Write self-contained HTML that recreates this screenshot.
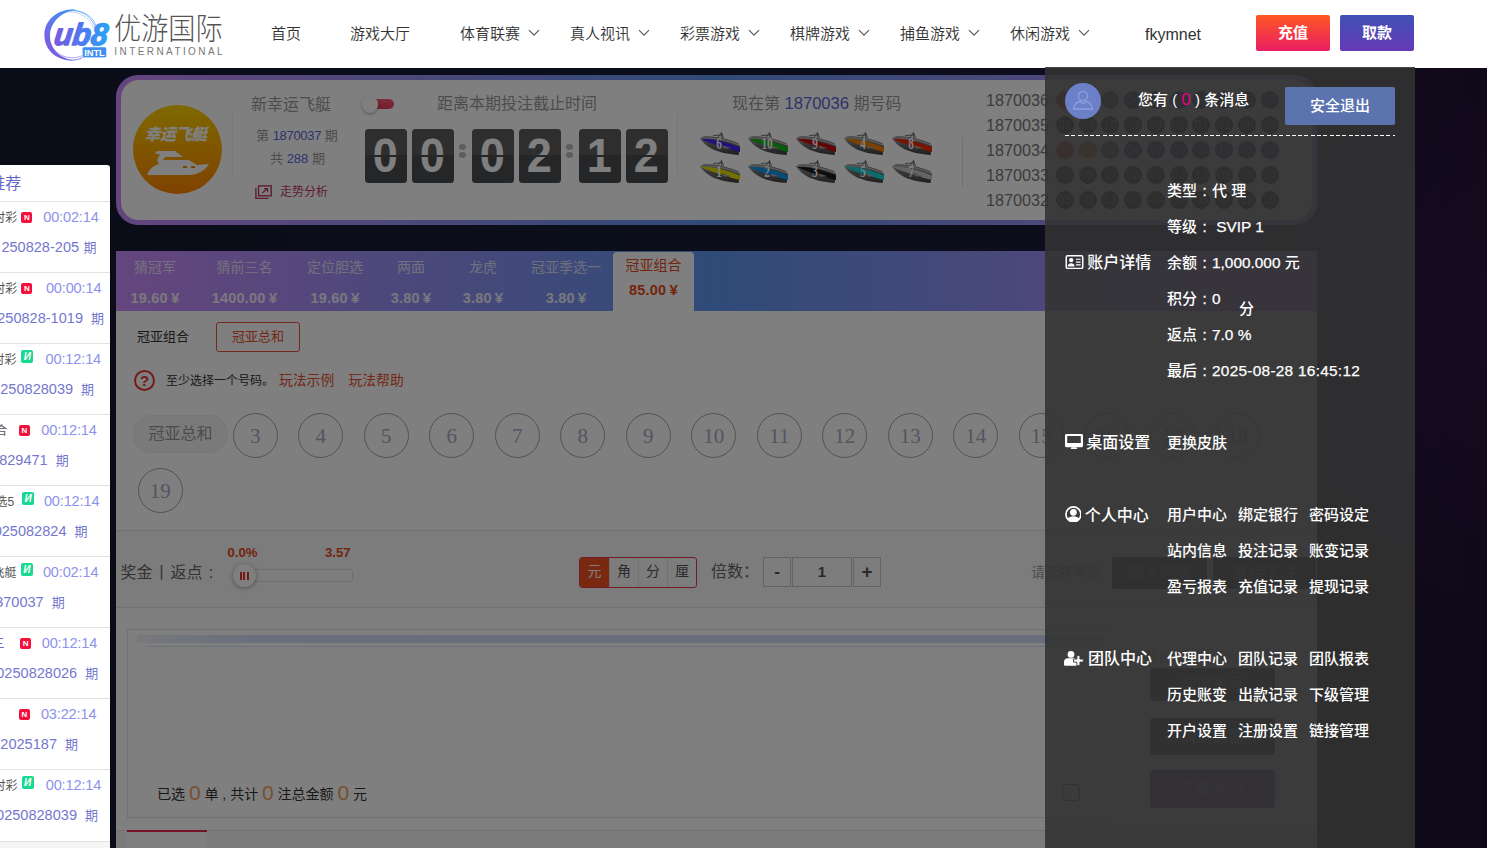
<!DOCTYPE html>
<html lang="zh-CN">
<head>
<meta charset="utf-8">
<title>优游国际</title>
<style>
*{box-sizing:border-box;margin:0;padding:0}
html,body{width:1487px;height:848px;overflow:hidden}
body{font-family:"Liberation Sans","Noto Sans CJK SC",sans-serif;font-size:14px;color:#333;background:#0b0c18;position:relative}
.abs{position:absolute}
.t{position:absolute;white-space:nowrap;line-height:20px;height:20px}
#bg{position:absolute;left:0;top:68px;width:1487px;height:780px;
 background:
 radial-gradient(ellipse 300px 500px at 1487px 250px,rgba(60,25,80,.55),rgba(0,0,0,0) 70%),
 linear-gradient(90deg,#141a2e 0%,#171d36 40%,#1d1a3a 75%,#1c1230 100%);}
#header{position:absolute;left:0;top:0;width:1487px;height:68px;background:#fff;z-index:50}
.nav{position:absolute;top:0;height:68px;line-height:67px;font-size:15px;color:#333;white-space:nowrap;font-weight:350}
.nav svg{position:absolute;top:29px}
.btn{position:absolute;top:15px;width:74px;height:36px;border-radius:2px;color:#fff;font-size:15px;font-weight:bold;text-align:center;line-height:35px}
#overlay{position:absolute;left:0;top:68px;width:1487px;height:780px;background:rgba(0,0,0,.5);z-index:20}
#main{position:absolute;left:0;top:0;width:1487px;height:848px;z-index:10}
#card{position:absolute;left:116px;top:75px;width:1201px;height:150px;border-radius:22px;
 background:linear-gradient(90deg,#ca8cfc 0%,#6096f0 50%,#ca8cfc 100%)}
#cardin{position:absolute;left:5px;top:5px;right:5px;bottom:5px;border-radius:18px;background:#fff}
.dg{position:absolute;top:128.5px;width:42px;height:54px;border-radius:3.5px;background:linear-gradient(180deg,#5c5c5c 0,#5c5c5c 50%,#494c50 50%,#494c50 100%);color:#fff;font-weight:bold;font-size:48px;line-height:54px;text-align:center;overflow:hidden}
.dg:after{content:"";position:absolute;left:0;right:0;top:26.2px;height:2px;background:#4a4c4e}
.colon{position:absolute;width:7px;height:6px;border-radius:50%;background:#bbb}
.hist{position:absolute;left:986px;font-size:16.2px;color:#777;line-height:20px;white-space:nowrap}
.hb{position:absolute;width:18px;height:18px;border-radius:9px;color:#777;font-size:12px;line-height:18px;text-align:center;margin:1px}
/* tabs */
#tabs{position:absolute;left:116px;top:251px;width:1201px;height:60px;background:linear-gradient(90deg,#ca8cfc 0%,#6096f0 50%,#ca8cfc 100%)}
.tab{position:absolute;top:0;height:60px;text-align:center;color:#fff;white-space:nowrap}
.tab .n{position:absolute;left:0;right:0;top:6px;font-size:14px;line-height:20px;opacity:.72}
.tab .p{position:absolute;left:0;right:0;top:37px;font-size:14.5px;line-height:20px;font-weight:bold;opacity:.88;letter-spacing:.2px}
.tab .y{margin-left:3px;font-size:15px}
#panel{position:absolute;left:116px;top:311px;width:1201px;height:537px;background:#fff}
.ball{position:absolute;width:45px;height:45px;border-radius:23px;border:1px solid #a4a4a4;font-family:"Liberation Serif","Noto Serif CJK SC",serif;font-size:21px;color:#a8a8c4;text-align:center;line-height:44px}
/* sidebar */
#side{position:absolute;left:0;top:165px;width:110px;height:683px;background:#fff;z-index:30;border-top-right-radius:3px;overflow:hidden}
#side .ln{position:absolute;left:0;width:110px;height:1px;background:#e2e2e2}
#side .nm{position:absolute;font-size:12px;color:#555;line-height:16px;white-space:nowrap}
#side .tm{position:absolute;letter-spacing:-0.15px;font-size:14.55px;color:#8d92ec;line-height:20px;white-space:nowrap}
#side .is{position:absolute;font-size:14.55px;color:#7577cf;line-height:20px;white-space:nowrap}
.bn{position:absolute;width:11px;height:11px;border-radius:2px;background:#f5103c;color:#fff;font-size:8px;font-weight:bold;line-height:11px;text-align:center}
.bh{position:absolute;width:12px;height:13px;border-radius:2px;background:#19d890;color:#fff;font-size:10px;font-weight:bold;line-height:13px;text-align:center}
/* dropdown */
#drop{position:absolute;left:1045px;top:67px;width:370px;height:781px;background:rgba(51,51,51,.89);z-index:60;color:#fff;font-size:15px;font-weight:500}
#drop .t{line-height:22px;height:22px}
#drop .cl{display:inline-block;width:15px;text-align:center;-webkit-text-stroke:0.3px #fff}
#drop .l{font-size:15.4px;-webkit-text-stroke:0.25px #fff}
</style>
</head>
<body>
<div id="bg"></div>
<div id="main">
<div id="card"><div id="cardin"></div></div>
<div class="abs" style="left:133px;top:105px;width:89px;height:89px;border-radius:50%;background:linear-gradient(180deg,#ffd200 0%,#ffaa00 50%,#ff8400 100%)"></div>
<div class="t" style="left:131px;width:89px;top:125px;text-align:center;color:#fff;font-weight:900;font-style:italic;font-size:16px;letter-spacing:-0.5px">幸运飞艇</div>
<svg class="abs" style="left:145px;top:149px" width="66" height="28" viewBox="0 0 66 28"><path d="M12 2 L30 2 L38 8 L20 8 L18 11 L44 11 L52 16 L64 15 C60 22 52 26 44 26 L2 26 C4 20 8 17 14 15 L12 11 L15 5 L10 5 Z" fill="#fff"/><rect x="38" y="17" width="4" height="2" fill="#f58a00"/><rect x="46" y="17" width="4" height="2" fill="#f58a00"/></svg>
<div class="abs" style="left:232px;top:113px;width:1px;height:62px;background:#ececec"></div>
<div class="t" style="left:251px;top:94.5px;font-size:16px;color:#999">新幸运飞艇</div>
<div class="t" style="left:256px;top:125.5px;font-size:13px;color:#999">第 <span style="color:#6166d6;letter-spacing:-0.3px">1870037</span> 期</div>
<div class="t" style="left:270px;top:148.5px;font-size:13px;color:#999">共 <span style="color:#6166d6">288</span> 期</div>
<svg class="abs" style="left:254.5px;top:185px" width="18" height="14.4" viewBox="0 0 20 16"><path d="M1 3 V15 H15" fill="none" stroke="#c0396a" stroke-width="1.6"/><rect x="4" y="1" width="14" height="11" fill="none" stroke="#c0396a" stroke-width="1.6"/><path d="M8 9 L14 4 M10 4 H14 V8" fill="none" stroke="#c0396a" stroke-width="1.4"/></svg>
<div class="t" style="left:280px;top:182px;font-size:12px;color:#c0396a">走势分析</div>
<div class="abs" style="left:368px;top:99.3px;width:26px;height:10px;border-radius:5px;background:linear-gradient(180deg,#ff5878,#e83a5c)"></div><div class="abs" style="left:361.7px;top:96.2px;width:16.5px;height:16.5px;border-radius:9px;background:#fff;box-shadow:0 1px 3px rgba(0,0,0,.35)"></div>
<div class="t" style="left:437px;top:94px;font-size:16px;color:#999">距离本期投注截止时间</div>
<div class="dg" style="left:364.5px"><span style="display:inline-block;transform:scaleX(.94)">0</span></div>
<div class="dg" style="left:411.5px"><span style="display:inline-block;transform:scaleX(.94)">0</span></div>
<div class="dg" style="left:471.5px"><span style="display:inline-block;transform:scaleX(.94)">0</span></div>
<div class="dg" style="left:518.5px"><span style="display:inline-block;transform:scaleX(.94)">2</span></div>
<div class="dg" style="left:578.5px"><span style="display:inline-block;transform:scaleX(.94)">1</span></div>
<div class="dg" style="left:625.5px"><span style="display:inline-block;transform:scaleX(.94)">2</span></div>
<div class="colon" style="left:459.4px;top:144px"></div><div class="colon" style="left:459.4px;top:151.6px"></div>
<div class="colon" style="left:566.3px;top:144px"></div><div class="colon" style="left:566.3px;top:151.6px"></div>
<div class="abs" style="left:677px;top:113px;width:1px;height:62px;background:#efefef"></div>
<div class="t" style="left:732px;top:94px;font-size:16px;color:#999">现在第 <span style="color:#6166d6;font-size:16.6px">1870036</span> 期号码</div>
<svg width="0" height="0" class="abs"><defs><linearGradient id="hull" x1="0" y1="0" x2="0.3" y2="1"><stop offset="0" stop-color="#9a9a9a"/><stop offset="0.45" stop-color="#6e6e6e"/><stop offset="1" stop-color="#4a4a4a"/></linearGradient></defs></svg>
<svg class="abs" style="left:700px;top:131.7px" width="41" height="24" viewBox="0 0 41 24"><path d="M0 6.3 C10 4.6 24 6.5 38.5 12.3 L40 14.6 L38.6 23 C30 22.6 20 20.6 13 17.6 C7 14.6 3 10.6 0 6.3 Z" fill="url(#hull)"/><path d="M0.3 6.8 C10 6.4 24 8.6 40 15.6 L40 20 L31 17.8 L23 13.6 L21 14 L26 16.6 L12 11.4 C7 9.8 3 8.2 0.3 6.8 Z" fill="#4422f0"/><path d="M22.5 13.4 L31.5 16.2 L24 16.6 Z" fill="#aaa"/><path d="M1 5.9 C12 4.6 24 6.8 39 13" fill="none" stroke="#b8b8b8" stroke-width="1.7"/><path d="M3 5 C12 4 24 6 38.5 11.6" fill="none" stroke="#555" stroke-width="0.7"/><path d="M13 3.5 L22 3 M18 5.5 L21.5 0.5 L23.5 5.8 M21.5 0.5 L21.8 6" fill="none" stroke="#666" stroke-width="0.9"/><text transform="translate(19 17) scale(0.66 1)" font-family="Liberation Serif,serif" font-size="17" font-weight="bold" fill="#fff" text-anchor="middle">6</text></svg>
<svg class="abs" style="left:748px;top:131.7px" width="41" height="24" viewBox="0 0 41 24"><path d="M0 6.3 C10 4.6 24 6.5 38.5 12.3 L40 14.6 L38.6 23 C30 22.6 20 20.6 13 17.6 C7 14.6 3 10.6 0 6.3 Z" fill="url(#hull)"/><path d="M0.3 6.8 C10 6.4 24 8.6 40 15.6 L40 20 L31 17.8 L23 13.6 L21 14 L26 16.6 L12 11.4 C7 9.8 3 8.2 0.3 6.8 Z" fill="#10b818"/><path d="M22.5 13.4 L31.5 16.2 L24 16.6 Z" fill="#aaa"/><path d="M1 5.9 C12 4.6 24 6.8 39 13" fill="none" stroke="#b8b8b8" stroke-width="1.7"/><path d="M3 5 C12 4 24 6 38.5 11.6" fill="none" stroke="#555" stroke-width="0.7"/><path d="M13 3.5 L22 3 M18 5.5 L21.5 0.5 L23.5 5.8 M21.5 0.5 L21.8 6" fill="none" stroke="#666" stroke-width="0.9"/><text transform="translate(19 17) scale(0.66 1)" font-family="Liberation Serif,serif" font-size="17" font-weight="bold" fill="#fff" text-anchor="middle">10</text></svg>
<svg class="abs" style="left:796px;top:131.7px" width="41" height="24" viewBox="0 0 41 24"><path d="M0 6.3 C10 4.6 24 6.5 38.5 12.3 L40 14.6 L38.6 23 C30 22.6 20 20.6 13 17.6 C7 14.6 3 10.6 0 6.3 Z" fill="url(#hull)"/><path d="M0.3 6.8 C10 6.4 24 8.6 40 15.6 L40 20 L31 17.8 L23 13.6 L21 14 L26 16.6 L12 11.4 C7 9.8 3 8.2 0.3 6.8 Z" fill="#c80808"/><path d="M22.5 13.4 L31.5 16.2 L24 16.6 Z" fill="#aaa"/><path d="M1 5.9 C12 4.6 24 6.8 39 13" fill="none" stroke="#b8b8b8" stroke-width="1.7"/><path d="M3 5 C12 4 24 6 38.5 11.6" fill="none" stroke="#555" stroke-width="0.7"/><path d="M13 3.5 L22 3 M18 5.5 L21.5 0.5 L23.5 5.8 M21.5 0.5 L21.8 6" fill="none" stroke="#666" stroke-width="0.9"/><text transform="translate(19 17) scale(0.66 1)" font-family="Liberation Serif,serif" font-size="17" font-weight="bold" fill="#fff" text-anchor="middle">9</text></svg>
<svg class="abs" style="left:844px;top:131.7px" width="41" height="24" viewBox="0 0 41 24"><path d="M0 6.3 C10 4.6 24 6.5 38.5 12.3 L40 14.6 L38.6 23 C30 22.6 20 20.6 13 17.6 C7 14.6 3 10.6 0 6.3 Z" fill="url(#hull)"/><path d="M0.3 6.8 C10 6.4 24 8.6 40 15.6 L40 20 L31 17.8 L23 13.6 L21 14 L26 16.6 L12 11.4 C7 9.8 3 8.2 0.3 6.8 Z" fill="#f58200"/><path d="M22.5 13.4 L31.5 16.2 L24 16.6 Z" fill="#aaa"/><path d="M1 5.9 C12 4.6 24 6.8 39 13" fill="none" stroke="#b8b8b8" stroke-width="1.7"/><path d="M3 5 C12 4 24 6 38.5 11.6" fill="none" stroke="#555" stroke-width="0.7"/><path d="M13 3.5 L22 3 M18 5.5 L21.5 0.5 L23.5 5.8 M21.5 0.5 L21.8 6" fill="none" stroke="#666" stroke-width="0.9"/><text transform="translate(19 17) scale(0.66 1)" font-family="Liberation Serif,serif" font-size="17" font-weight="bold" fill="#fff" text-anchor="middle">4</text></svg>
<svg class="abs" style="left:892px;top:131.7px" width="41" height="24" viewBox="0 0 41 24"><path d="M0 6.3 C10 4.6 24 6.5 38.5 12.3 L40 14.6 L38.6 23 C30 22.6 20 20.6 13 17.6 C7 14.6 3 10.6 0 6.3 Z" fill="url(#hull)"/><path d="M0.3 6.8 C10 6.4 24 8.6 40 15.6 L40 20 L31 17.8 L23 13.6 L21 14 L26 16.6 L12 11.4 C7 9.8 3 8.2 0.3 6.8 Z" fill="#f42800"/><path d="M22.5 13.4 L31.5 16.2 L24 16.6 Z" fill="#aaa"/><path d="M1 5.9 C12 4.6 24 6.8 39 13" fill="none" stroke="#b8b8b8" stroke-width="1.7"/><path d="M3 5 C12 4 24 6 38.5 11.6" fill="none" stroke="#555" stroke-width="0.7"/><path d="M13 3.5 L22 3 M18 5.5 L21.5 0.5 L23.5 5.8 M21.5 0.5 L21.8 6" fill="none" stroke="#666" stroke-width="0.9"/><text transform="translate(19 17) scale(0.66 1)" font-family="Liberation Serif,serif" font-size="17" font-weight="bold" fill="#fff" text-anchor="middle">8</text></svg>
<svg class="abs" style="left:700px;top:159.7px" width="41" height="24" viewBox="0 0 41 24"><path d="M0 6.3 C10 4.6 24 6.5 38.5 12.3 L40 14.6 L38.6 23 C30 22.6 20 20.6 13 17.6 C7 14.6 3 10.6 0 6.3 Z" fill="url(#hull)"/><path d="M0.3 6.8 C10 6.4 24 8.6 40 15.6 L40 20 L31 17.8 L23 13.6 L21 14 L26 16.6 L12 11.4 C7 9.8 3 8.2 0.3 6.8 Z" fill="#e8e000"/><path d="M22.5 13.4 L31.5 16.2 L24 16.6 Z" fill="#aaa"/><path d="M1 5.9 C12 4.6 24 6.8 39 13" fill="none" stroke="#b8b8b8" stroke-width="1.7"/><path d="M3 5 C12 4 24 6 38.5 11.6" fill="none" stroke="#555" stroke-width="0.7"/><path d="M13 3.5 L22 3 M18 5.5 L21.5 0.5 L23.5 5.8 M21.5 0.5 L21.8 6" fill="none" stroke="#666" stroke-width="0.9"/><text transform="translate(19 17) scale(0.66 1)" font-family="Liberation Serif,serif" font-size="17" font-weight="bold" fill="#fff" text-anchor="middle">1</text></svg>
<svg class="abs" style="left:748px;top:159.7px" width="41" height="24" viewBox="0 0 41 24"><path d="M0 6.3 C10 4.6 24 6.5 38.5 12.3 L40 14.6 L38.6 23 C30 22.6 20 20.6 13 17.6 C7 14.6 3 10.6 0 6.3 Z" fill="url(#hull)"/><path d="M0.3 6.8 C10 6.4 24 8.6 40 15.6 L40 20 L31 17.8 L23 13.6 L21 14 L26 16.6 L12 11.4 C7 9.8 3 8.2 0.3 6.8 Z" fill="#0a98f0"/><path d="M22.5 13.4 L31.5 16.2 L24 16.6 Z" fill="#aaa"/><path d="M1 5.9 C12 4.6 24 6.8 39 13" fill="none" stroke="#b8b8b8" stroke-width="1.7"/><path d="M3 5 C12 4 24 6 38.5 11.6" fill="none" stroke="#555" stroke-width="0.7"/><path d="M13 3.5 L22 3 M18 5.5 L21.5 0.5 L23.5 5.8 M21.5 0.5 L21.8 6" fill="none" stroke="#666" stroke-width="0.9"/><text transform="translate(19 17) scale(0.66 1)" font-family="Liberation Serif,serif" font-size="17" font-weight="bold" fill="#fff" text-anchor="middle">2</text></svg>
<svg class="abs" style="left:796px;top:159.7px" width="41" height="24" viewBox="0 0 41 24"><path d="M0 6.3 C10 4.6 24 6.5 38.5 12.3 L40 14.6 L38.6 23 C30 22.6 20 20.6 13 17.6 C7 14.6 3 10.6 0 6.3 Z" fill="url(#hull)"/><path d="M0.3 6.8 C10 6.4 24 8.6 40 15.6 L40 20 L31 17.8 L23 13.6 L21 14 L26 16.6 L12 11.4 C7 9.8 3 8.2 0.3 6.8 Z" fill="#1a1a1a"/><path d="M22.5 13.4 L31.5 16.2 L24 16.6 Z" fill="#aaa"/><path d="M1 5.9 C12 4.6 24 6.8 39 13" fill="none" stroke="#b8b8b8" stroke-width="1.7"/><path d="M3 5 C12 4 24 6 38.5 11.6" fill="none" stroke="#555" stroke-width="0.7"/><path d="M13 3.5 L22 3 M18 5.5 L21.5 0.5 L23.5 5.8 M21.5 0.5 L21.8 6" fill="none" stroke="#666" stroke-width="0.9"/><text transform="translate(19 17) scale(0.66 1)" font-family="Liberation Serif,serif" font-size="17" font-weight="bold" fill="#fff" text-anchor="middle">3</text></svg>
<svg class="abs" style="left:844px;top:159.7px" width="41" height="24" viewBox="0 0 41 24"><path d="M0 6.3 C10 4.6 24 6.5 38.5 12.3 L40 14.6 L38.6 23 C30 22.6 20 20.6 13 17.6 C7 14.6 3 10.6 0 6.3 Z" fill="url(#hull)"/><path d="M0.3 6.8 C10 6.4 24 8.6 40 15.6 L40 20 L31 17.8 L23 13.6 L21 14 L26 16.6 L12 11.4 C7 9.8 3 8.2 0.3 6.8 Z" fill="#12d8d8"/><path d="M22.5 13.4 L31.5 16.2 L24 16.6 Z" fill="#aaa"/><path d="M1 5.9 C12 4.6 24 6.8 39 13" fill="none" stroke="#b8b8b8" stroke-width="1.7"/><path d="M3 5 C12 4 24 6 38.5 11.6" fill="none" stroke="#555" stroke-width="0.7"/><path d="M13 3.5 L22 3 M18 5.5 L21.5 0.5 L23.5 5.8 M21.5 0.5 L21.8 6" fill="none" stroke="#666" stroke-width="0.9"/><text transform="translate(19 17) scale(0.66 1)" font-family="Liberation Serif,serif" font-size="17" font-weight="bold" fill="#fff" text-anchor="middle">5</text></svg>
<svg class="abs" style="left:892px;top:159.7px" width="41" height="24" viewBox="0 0 41 24"><path d="M0 6.3 C10 4.6 24 6.5 38.5 12.3 L40 14.6 L38.6 23 C30 22.6 20 20.6 13 17.6 C7 14.6 3 10.6 0 6.3 Z" fill="url(#hull)"/><path d="M0.3 6.8 C10 6.4 24 8.6 40 15.6 L40 20 L31 17.8 L23 13.6 L21 14 L26 16.6 L12 11.4 C7 9.8 3 8.2 0.3 6.8 Z" fill="#c8c8c8"/><path d="M22.5 13.4 L31.5 16.2 L24 16.6 Z" fill="#aaa"/><path d="M1 5.9 C12 4.6 24 6.8 39 13" fill="none" stroke="#b8b8b8" stroke-width="1.7"/><path d="M3 5 C12 4 24 6 38.5 11.6" fill="none" stroke="#555" stroke-width="0.7"/><path d="M13 3.5 L22 3 M18 5.5 L21.5 0.5 L23.5 5.8 M21.5 0.5 L21.8 6" fill="none" stroke="#666" stroke-width="0.9"/><text transform="translate(19 17) scale(0.66 1)" font-family="Liberation Serif,serif" font-size="17" font-weight="bold" fill="#fff" text-anchor="middle">7</text></svg>
<div class="abs" style="left:962px;top:137px;width:1px;height:50px;background:#e3e3e3"></div>
<div class="hist" style="top:89.5px">1870036</div>
<div class="hb" style="left:1054.9px;top:89.5px;background:#d83020">06</div>
<div class="hb" style="left:1077.66px;top:89.5px;background:#c87010">03</div>
<div class="hb" style="left:1100.42px;top:89.5px;background:#506030">09</div>
<div class="hb" style="left:1123.18px;top:89.5px;background:#1c2870">04</div>
<div class="hb" style="left:1145.94px;top:89.5px;background:#1c2870">08</div>
<div class="hb" style="left:1168.7px;top:89.5px;background:#1c2870">01</div>
<div class="hb" style="left:1191.46px;top:89.5px;background:#1c2870">02</div>
<div class="hb" style="left:1214.22px;top:89.5px;background:#1c2870">10</div>
<div class="hb" style="left:1236.98px;top:89.5px;background:#1c2870">05</div>
<div class="hb" style="left:1259.74px;top:89.5px;background:#1c2870">07</div>
<div class="hist" style="top:114.5px">1870035</div>
<div class="hb" style="left:1054.9px;top:114.5px;background:#1c1c1c">01</div>
<div class="hb" style="left:1077.66px;top:114.5px;background:#1c1c1c">04</div>
<div class="hb" style="left:1100.42px;top:114.5px;background:#1c1c1c">10</div>
<div class="hb" style="left:1123.18px;top:114.5px;background:#1c1c1c">03</div>
<div class="hb" style="left:1145.94px;top:114.5px;background:#1c1c1c">09</div>
<div class="hb" style="left:1168.7px;top:114.5px;background:#1c1c1c">06</div>
<div class="hb" style="left:1191.46px;top:114.5px;background:#1c1c1c">07</div>
<div class="hb" style="left:1214.22px;top:114.5px;background:#1c1c1c">02</div>
<div class="hb" style="left:1236.98px;top:114.5px;background:#1c1c1c">08</div>
<div class="hb" style="left:1259.74px;top:114.5px;background:#1c1c1c">05</div>
<div class="hist" style="top:139.5px">1870034</div>
<div class="hb" style="left:1054.9px;top:139.5px;background:#d83020">05</div>
<div class="hb" style="left:1077.66px;top:139.5px;background:#c87010">07</div>
<div class="hb" style="left:1100.42px;top:139.5px;background:#506030">06</div>
<div class="hb" style="left:1123.18px;top:139.5px;background:#1c2870">04</div>
<div class="hb" style="left:1145.94px;top:139.5px;background:#1c2870">02</div>
<div class="hb" style="left:1168.7px;top:139.5px;background:#1c2870">08</div>
<div class="hb" style="left:1191.46px;top:139.5px;background:#1c2870">03</div>
<div class="hb" style="left:1214.22px;top:139.5px;background:#1c2870">10</div>
<div class="hb" style="left:1236.98px;top:139.5px;background:#1c2870">01</div>
<div class="hb" style="left:1259.74px;top:139.5px;background:#1c2870">09</div>
<div class="hist" style="top:164.5px">1870033</div>
<div class="hb" style="left:1054.9px;top:164.5px;background:#1c1c1c">09</div>
<div class="hb" style="left:1077.66px;top:164.5px;background:#1c1c1c">05</div>
<div class="hb" style="left:1100.42px;top:164.5px;background:#1c1c1c">07</div>
<div class="hb" style="left:1123.18px;top:164.5px;background:#1c1c1c">06</div>
<div class="hb" style="left:1145.94px;top:164.5px;background:#1c1c1c">01</div>
<div class="hb" style="left:1168.7px;top:164.5px;background:#1c1c1c">02</div>
<div class="hb" style="left:1191.46px;top:164.5px;background:#1c1c1c">10</div>
<div class="hb" style="left:1214.22px;top:164.5px;background:#1c1c1c">03</div>
<div class="hb" style="left:1236.98px;top:164.5px;background:#1c1c1c">08</div>
<div class="hb" style="left:1259.74px;top:164.5px;background:#1c1c1c">04</div>
<div class="hist" style="top:189.5px">1870032</div>
<div class="hb" style="left:1054.9px;top:189.5px;background:#1c1c1c">05</div>
<div class="hb" style="left:1077.66px;top:189.5px;background:#1c1c1c">01</div>
<div class="hb" style="left:1100.42px;top:189.5px;background:#1c1c1c">03</div>
<div class="hb" style="left:1123.18px;top:189.5px;background:#1c1c1c">08</div>
<div class="hb" style="left:1145.94px;top:189.5px;background:#1c1c1c">09</div>
<div class="hb" style="left:1168.7px;top:189.5px;background:#1c1c1c">04</div>
<div class="hb" style="left:1191.46px;top:189.5px;background:#1c1c1c">06</div>
<div class="hb" style="left:1214.22px;top:189.5px;background:#1c1c1c">07</div>
<div class="hb" style="left:1236.98px;top:189.5px;background:#1c1c1c">02</div>
<div class="hb" style="left:1259.74px;top:189.5px;background:#1c1c1c">10</div>
<div id="tabs">
<div class="tab" style="left:0px;width:78px"><div class="n">猜冠军</div><div class="p">19.60<span class="y">¥</span></div></div>
<div class="tab" style="left:78px;width:101px"><div class="n">猜前三名</div><div class="p">1400.00<span class="y">¥</span></div></div>
<div class="tab" style="left:179px;width:80px"><div class="n">定位胆选</div><div class="p">19.60<span class="y">¥</span></div></div>
<div class="tab" style="left:259px;width:72px"><div class="n">两面</div><div class="p">3.80<span class="y">¥</span></div></div>
<div class="tab" style="left:331px;width:72px"><div class="n">龙虎</div><div class="p">3.80<span class="y">¥</span></div></div>
<div class="tab" style="left:403px;width:94px"><div class="n">冠亚季选一</div><div class="p">3.80<span class="y">¥</span></div></div>
<div class="tab" style="left:497px;width:81px;top:1px;height:59px;background:#fff;border-radius:4px 4px 0 0;color:#e64a19"><div class="n" style="top:3px;opacity:1">冠亚组合</div><div class="p" style="top:28px;opacity:1">85.00<span class="y">¥</span></div></div>
</div>
<div id="panel"></div>
<div class="t" style="left:137px;top:327px;font-size:13px;color:#333">冠亚组合</div>
<div class="abs" style="left:216px;top:322px;width:84px;height:30px;border:1px solid #e8503a;border-radius:3px;color:#e65030;font-size:13px;line-height:28px;text-align:center">冠亚总和</div>
<div class="abs" style="left:134px;top:370px;width:21px;height:21px;border-radius:11px;border:2px solid #e53935;color:#e53935;font-weight:bold;font-size:15px;line-height:17px;text-align:center">?</div>
<div class="t" style="left:166px;top:371px;font-size:12px;color:#333">至少选择一个号码。</div>
<div class="t" style="left:279px;top:371px;font-size:13.8px;color:#e65030">玩法示例</div>
<div class="t" style="left:348.5px;top:371px;font-size:13.8px;color:#e65030">玩法帮助</div>
<div class="abs" style="left:133px;top:415px;width:95px;height:38px;border-radius:19px;background:#f5f5f5;border:1px solid #ececec;color:#999;font-size:16px;line-height:36px;text-align:center">冠亚总和</div>
<div class="ball" style="left:232.8px;top:413px">3</div>
<div class="ball" style="left:298.3px;top:413px">4</div>
<div class="ball" style="left:363.8px;top:413px">5</div>
<div class="ball" style="left:429.3px;top:413px">6</div>
<div class="ball" style="left:494.8px;top:413px">7</div>
<div class="ball" style="left:560.3px;top:413px">8</div>
<div class="ball" style="left:625.8px;top:413px">9</div>
<div class="ball" style="left:691.3px;top:413px">10</div>
<div class="ball" style="left:756.8px;top:413px">11</div>
<div class="ball" style="left:822.3px;top:413px">12</div>
<div class="ball" style="left:887.8px;top:413px">13</div>
<div class="ball" style="left:953.3px;top:413px">14</div>
<div class="ball" style="left:1018.8px;top:413px">15</div>
<div class="ball" style="left:1084.3px;top:413px">16</div>
<div class="ball" style="left:1149.8px;top:413px">17</div>
<div class="ball" style="left:1215.3px;top:413px">18</div>
<div class="ball" style="left:137.8px;top:468px">19</div>
<div class="abs" style="left:116px;top:530px;width:1201px;height:78px;background:#f8f8f8;border-top:1px solid #e0e0e0;border-bottom:1px solid #e0e0e0"></div>
<div class="t" style="left:120.5px;top:563px;font-size:16px;color:#666">奖金<span style="display:inline-block;width:18px;text-align:center">丨</span>返点<span style="display:inline-block;width:17px;text-align:center">:</span></div>
<div class="t" style="left:227.5px;top:543px;font-size:13.2px;font-weight:bold;color:#e64a19">0.0%</div>
<div class="t" style="left:325px;top:543px;font-size:13.2px;font-weight:bold;color:#e64a19">3.57</div>
<div class="abs" style="left:236px;top:569px;width:117px;height:13px;border-radius:3px;border:1px solid #ddd;background:#fafafa"></div>
<div class="abs" style="left:233px;top:564px;width:23px;height:23px;border-radius:12px;background:#fff;box-shadow:0 1px 4px rgba(0,0,0,.35)"></div>
<div class="abs" style="left:240px;top:572px;width:9px;height:8px;background:linear-gradient(90deg,#e53935 0 2px,transparent 2px 3.5px,#e53935 3.5px 5.5px,transparent 5.5px 7px,#e53935 7px 9px)"></div>
<div class="abs" style="left:579px;top:557px;width:118px;height:31px;border:1px solid #e53950;border-radius:3px;background:#fafafa;overflow:hidden"><div class="abs" style="left:0px;top:0;width:29px;height:29px;line-height:27px;text-align:center;font-size:14px;background:#f4511e;color:#fff;">元</div><div class="abs" style="left:29px;top:0;width:29px;height:29px;line-height:27px;text-align:center;font-size:14px;color:#555;border-left:1px solid #e4e4e4;">角</div><div class="abs" style="left:58px;top:0;width:29px;height:29px;line-height:27px;text-align:center;font-size:14px;color:#555;border-left:1px solid #e4e4e4;">分</div><div class="abs" style="left:87px;top:0;width:29px;height:29px;line-height:27px;text-align:center;font-size:14px;color:#555;border-left:1px solid #e4e4e4;">厘</div></div>
<div class="t" style="left:711px;top:562px;font-size:16px;color:#666">倍数：</div>
<div class="abs" style="left:763px;top:557px;width:28px;height:30px;border:1px solid #c6c6c6;background:#fafafa;color:#555;font-weight:bold;font-size:17px;line-height:27px;text-align:center">-</div>
<div class="abs" style="left:792px;top:557px;width:60px;height:30px;border:1px solid #c6c6c6;background:#fafafa;color:#555;font-weight:bold;font-size:15px;line-height:28px;text-align:center">1</div>
<div class="abs" style="left:853px;top:557px;width:28px;height:30px;border:1px solid #c6c6c6;background:#fafafa;color:#555;font-weight:bold;font-size:19px;line-height:27px;text-align:center">+</div>
<div class="t" style="left:1031px;top:562px;font-size:14px;color:#999">请选择号码</div>
<div class="abs" style="left:1112px;top:557px;width:95px;height:32px;border-radius:3px;background:#3a3a3a;color:#777;font-size:16px;line-height:32px;text-align:center;font-weight:bold">加入购篮</div>
<div class="abs" style="left:1213px;top:557px;width:103px;height:32px;border-radius:3px;background:#3a3a3a;color:#777;font-size:16px;line-height:32px;text-align:center;font-weight:bold">直接下注</div>
<div class="abs" style="left:127px;top:629px;width:985px;height:189px;border:1px solid #e2e2e2;border-right:none"></div>
<div class="abs" style="left:137px;top:635px;width:966px;height:8px;background:linear-gradient(90deg,#eef2fb 0,#e4eaf8 40px,#d3def8 120px,#d0dcf8 100%)"></div>
<div class="abs" style="left:146px;top:646px;width:957px;height:1px;background:#d9e0f2"></div>
<div class="t" style="left:157px;top:783px;font-size:14px;color:#333">已选 <span style="font-size:21px;color:#f0a060;font-weight:300;vertical-align:-1px">0</span> 单 , 共计 <span style="font-size:21px;color:#f0a060;font-weight:300;vertical-align:-1px">0</span> 注总金额 <span style="font-size:21px;color:#f0a060;font-weight:300;vertical-align:-1px">0</span> 元</div>
<div class="abs" style="left:116px;top:830px;width:1201px;height:18px;background:#f6f6f6;border-top:1px solid #e2e2e2"></div>
<div class="abs" style="left:127px;top:830px;width:80px;height:18px;background:#fff;border-top:2px solid #e8274b"></div>
<div class="abs" style="left:1150px;top:770px;width:125px;height:38px;border-radius:3px;background:#6a3aa8;color:#9a78d0;font-size:17px;line-height:38px;text-align:center;font-weight:bold">立即投注</div>
<div class="abs" style="left:1150px;top:668px;width:125px;height:33px;border-radius:3px;background:#555;color:#888;font-size:16px;line-height:33px;text-align:center;font-weight:bold">我要追号</div>
<div class="abs" style="left:1150px;top:718px;width:125px;height:37px;border-radius:3px;background:#555;color:#888;font-size:16px;line-height:37px;text-align:center;font-weight:bold">清空购篮</div>
<div class="t" style="left:1144px;top:647px;font-size:14px;color:#aaa">截止时间 1:00:00:12</div>
<div class="abs" style="left:1062px;top:784px;width:18px;height:17px;border-radius:4px;border:1.5px solid #555;background:#fff"></div>
</div>
<div id="overlay"></div>
<div id="side">
<div class="t" style="right:88.7px;top:9px;font-size:16px;color:#6467c9">推荐</div>
<div class="ln" style="top:36px"></div>
<div class="nm" style="right:92.8px;top:44.8px">时时彩</div>
<div class="bn" style="left:21.3px;top:47.099999999999994px">N</div>
<div class="tm" style="left:43.2px;top:41.599999999999994px">00:02:14</div>
<div class="is" style="right:13.5px;top:72.1px">250828-205<span style="font-size:13px;margin-left:4.4px">期</span></div>
<div class="ln" style="top:107px"></div>
<div class="nm" style="right:92.8px;top:115.8px">时时彩</div>
<div class="bn" style="left:21.3px;top:118.1px">N</div>
<div class="tm" style="left:45.9px;top:112.6px">00:00:14</div>
<div class="is" style="right:6px;top:143.1px">250828-1019<span style="font-size:13px;margin-left:8px">期</span></div>
<div class="ln" style="top:178px"></div>
<div class="nm" style="right:93.5px;top:186.8px">时时彩</div>
<div class="bh" style="left:21.3px;top:184.8px"><i>И</i></div>
<div class="tm" style="left:45.6px;top:183.60000000000002px">00:12:14</div>
<div class="is" style="right:15.900000000000006px;top:214.10000000000002px">250828039<span style="font-size:13px;margin-left:8px">期</span></div>
<div class="ln" style="top:249px"></div>
<div class="nm" style="right:102.7px;top:257.8px">六合</div>
<div class="bn" style="left:19px;top:260.1px">N</div>
<div class="tm" style="left:41.3px;top:254.60000000000002px">00:12:14</div>
<div class="is" style="right:41.3px;top:285.1px">829471<span style="font-size:13px;margin-left:8px">期</span></div>
<div class="ln" style="top:320px"></div>
<div class="nm" style="right:95.8px;top:328.8px">11选5</div>
<div class="bh" style="left:22px;top:326.8px"><i>И</i></div>
<div class="tm" style="left:43.9px;top:325.6px">00:12:14</div>
<div class="is" style="right:22.5px;top:356.1px">025082824<span style="font-size:13px;margin-left:8px">期</span></div>
<div class="ln" style="top:391px"></div>
<div class="nm" style="right:93.5px;top:399.8px">幸运飞艇</div>
<div class="bh" style="left:20.8px;top:397.8px"><i>И</i></div>
<div class="tm" style="left:42.9px;top:396.6px">00:02:14</div>
<div class="is" style="right:45.3px;top:427.1px">370037<span style="font-size:13px;margin-left:8px">期</span></div>
<div class="ln" style="top:462px"></div>
<div class="nm" style="right:105.4px;top:470.8px;color:#6a6ac8">快三</div>
<div class="bn" style="left:20.2px;top:473.1px">N</div>
<div class="tm" style="left:41.7px;top:467.6px">00:12:14</div>
<div class="is" style="right:11.799999999999997px;top:498.1px">0250828026<span style="font-size:13px;margin-left:8px">期</span></div>
<div class="ln" style="top:533px"></div>
<div class="bn" style="left:18.8px;top:544.0999999999999px">N</div>
<div class="tm" style="left:40.9px;top:538.5999999999999px">03:22:14</div>
<div class="is" style="right:32px;top:569.0999999999999px">2025187<span style="font-size:13px;margin-left:8px">期</span></div>
<div class="ln" style="top:604px"></div>
<div class="nm" style="right:92.5px;top:612.8px">时时彩</div>
<div class="bh" style="left:21.5px;top:610.8px"><i>И</i></div>
<div class="tm" style="left:45.7px;top:609.5999999999999px">00:12:14</div>
<div class="is" style="right:12px;top:640.0999999999999px">0250828039<span style="font-size:13px;margin-left:8px">期</span></div>
<div class="abs" style="left:0;top:676px;width:110px;height:8px;background:#f5f5f5;border-top:1px solid #e2e2e2"></div>
</div>
<div id="header">
<div id="logo" class="abs" style="left:43px;top:8px;width:185px;height:54px">
<svg width="70" height="54" viewBox="43 8 70 54" class="abs" style="left:0;top:0">
<defs><linearGradient id="lg1" x1="0" y1="1" x2="1" y2="0"><stop offset="0" stop-color="#8a4fe0"/><stop offset="1" stop-color="#2fa4f5"/></linearGradient>
<linearGradient id="lg2" x1="0" y1="0" x2="1" y2="0"><stop offset="0" stop-color="#7a58e2"/><stop offset="0.55" stop-color="#4a7cf0"/><stop offset="1" stop-color="#2aa4f6"/></linearGradient></defs>
<path d="M76 9.4 C58 8.4 44.4 20 44.4 35 C44.4 50 56 61 74 60.2 C59 58.4 50 48 50 36 C50 23 60 12 76 9.4 Z" fill="url(#lg1)"/>
<circle cx="71.5" cy="35.2" r="25" fill="none" stroke="url(#lg1)" stroke-width="0.8" opacity=".8"/>
<ellipse cx="73" cy="34.2" rx="24.6" ry="23.4" fill="none" stroke="url(#lg1)" stroke-width="0.7" opacity=".7" transform="rotate(-20 73 34.2)"/>
<ellipse cx="70.5" cy="36" rx="25.4" ry="24" fill="none" stroke="url(#lg1)" stroke-width="0.6" opacity=".55" transform="rotate(25 70.5 36)"/>
<text transform="translate(53.2 45) skewX(-7)" font-family="Liberation Sans,sans-serif" font-weight="bold" font-style="italic" font-size="31" fill="url(#lg2)" stroke="url(#lg2)" stroke-width="1.3" stroke-linejoin="round" textLength="53.5" lengthAdjust="spacingAndGlyphs">ub8</text>
<rect x="82.3" y="46.9" width="24.3" height="10.8" rx="1.6" fill="#3f8ff0" stroke="#fff" stroke-width="0.6"/>
<text x="84.2" y="55.8" font-family="Liberation Sans,sans-serif" font-weight="bold" font-size="9.5" fill="#fff" textLength="20.6" lengthAdjust="spacingAndGlyphs">INTL</text>
</svg>
<div class="abs" style="left:71.4px;top:1px;font-size:30px;color:#555;font-weight:300;white-space:nowrap;line-height:40px;transform:scaleX(0.905);transform-origin:left">优游国际</div>
<div class="abs" style="left:71.3px;top:38px;font-size:10px;color:#777;letter-spacing:2.42px;white-space:nowrap;line-height:12px">INTERNATIONAL</div>
</div>
<div class="nav" style="left:271px">首页</div>
<div class="nav" style="left:350px">游戏大厅</div>
<div class="nav" style="left:460px">体育联赛<svg width="12" height="8" viewBox="0 0 12 8" style="left:68px"><path d="M1 1.2 L6 6.2 L11 1.2" fill="none" stroke="#555" stroke-width="1.1"/></svg></div>
<div class="nav" style="left:570px">真人视讯<svg width="12" height="8" viewBox="0 0 12 8" style="left:68px"><path d="M1 1.2 L6 6.2 L11 1.2" fill="none" stroke="#555" stroke-width="1.1"/></svg></div>
<div class="nav" style="left:680px">彩票游戏<svg width="12" height="8" viewBox="0 0 12 8" style="left:68px"><path d="M1 1.2 L6 6.2 L11 1.2" fill="none" stroke="#555" stroke-width="1.1"/></svg></div>
<div class="nav" style="left:790px">棋牌游戏<svg width="12" height="8" viewBox="0 0 12 8" style="left:68px"><path d="M1 1.2 L6 6.2 L11 1.2" fill="none" stroke="#555" stroke-width="1.1"/></svg></div>
<div class="nav" style="left:900px">捕鱼游戏<svg width="12" height="8" viewBox="0 0 12 8" style="left:68px"><path d="M1 1.2 L6 6.2 L11 1.2" fill="none" stroke="#555" stroke-width="1.1"/></svg></div>
<div class="nav" style="left:1010px">休闲游戏<svg width="12" height="8" viewBox="0 0 12 8" style="left:68px"><path d="M1 1.2 L6 6.2 L11 1.2" fill="none" stroke="#555" stroke-width="1.1"/></svg></div>
<div class="nav" style="left:1145px;font-size:16px;line-height:69px;font-weight:400">fkymnet</div>
<div class="btn" style="left:1256px;background:linear-gradient(180deg,#ff5722,#e91e63)">充值</div>
<div class="btn" style="left:1340px;background:linear-gradient(180deg,#3f51b5,#673ab7)">取款</div>
</div>
<div id="drop">
<div class="abs" style="left:20px;top:16px;width:36px;height:36px;border-radius:18px;background:#6c80c9"></div>
<svg class="abs" style="left:27px;top:22px" width="22" height="22" viewBox="0 0 22 22"><circle cx="11" cy="7" r="4.6" fill="none" stroke="#8fa0dd" stroke-width="1.3"/><path d="M1.5 20 C2 14.5 6 12.5 8 12.5 L11 15 L14 12.5 C16 12.5 20 14.5 20.5 20 Z" fill="none" stroke="#8fa0dd" stroke-width="1.3"/></svg>
<div class="t" style="left:93px;top:22.2px;">您有 ( <span style="color:#e6007e;font-weight:300;font-size:17px">0</span> ) 条消息</div>
<div class="abs" style="left:240px;top:20px;width:110px;height:38px;border-radius:2px;background:#5b73ae;text-align:center;line-height:38px;font-size:15px">安全退出</div>
<div class="abs" style="left:20px;top:68px;width:330px;height:1px;background:repeating-linear-gradient(90deg,#fff 0 4px,transparent 4px 6.3px)"></div>
<div class="t" style="left:122px;top:112.7px;">类型<span class="cl">:</span>代 理</div>
<div class="t" style="left:122px;top:148.7px;">等级<span class="cl">:</span> <span class="l">SVIP 1</span></div>
<div class="t" style="left:122px;top:184.7px;">余额<span class="cl">:</span><span class="l">1,000.000</span> 元</div>
<div class="t" style="left:122px;top:220.7px;">积分<span class="cl">:</span><span class="l">0</span></div>
<div class="t" style="left:194px;top:230.7px;">分</div>
<div class="t" style="left:122px;top:256.7px;">返点<span class="cl">:</span><span class="l">7.0 %</span></div>
<div class="t" style="left:122px;top:292.7px;">最后<span class="cl">:</span><span class="l" style="letter-spacing:0.27px">2025-08-28 16:45:12</span></div>
<svg class="abs" style="left:19.6px;top:187.9px" width="19" height="14.2" viewBox="0 0 19 15"><rect x="0.8" y="0.8" width="17.4" height="13.4" rx="1.5" fill="none" stroke="#fff" stroke-width="1.6"/><circle cx="6" cy="5.4" r="2.3" fill="#fff"/><path d="M2.4 12.2 C2.4 7.6 9.6 7.6 9.6 12.2 Z" fill="#fff"/><path d="M11 4.5 H16 M11 7.5 H16 M11 10.5 H16" stroke="#fff" stroke-width="1.3"/></svg>
<div class="t" style="left:42.299999999999955px;top:185.2px;font-size:16px">账户详情</div>
<svg class="abs" style="left:19.6px;top:366.9px" width="18" height="15.4" viewBox="0 0 18 15.4"><path fill-rule="evenodd" d="M1.5 0 H16.5 Q18 0 18 1.5 V11.8 Q18 13.3 16.5 13.3 H1.5 Q0 13.3 0 11.8 V1.5 Q0 0 1.5 0 Z M2.2 1.9 V8.9 H15.8 V1.9 Z" fill="#fff"/><path d="M6.6 13.3 H11.4 L12.6 15.3 H5.4 Z" fill="#fff"/></svg>
<div class="t" style="left:41.299999999999955px;top:365.4px;font-size:16px">桌面设置</div>
<div class="t" style="left:122px;top:364.7px;">更换皮肤</div>
<svg class="abs" style="left:19.6px;top:438.7px" width="16.8" height="16.8" viewBox="0 0 16 16"><circle cx="8" cy="8" r="7.1" fill="none" stroke="#fff" stroke-width="1.6"/><circle cx="8" cy="6" r="3.2" fill="#fff"/><path d="M2.4 12.4 C4 8.8 12 8.8 13.6 12.4 C11 15.6 5 15.6 2.4 12.4 Z" fill="#fff"/></svg>
<div class="t" style="left:39.700000000000045px;top:437.49999999999994px;font-size:16px">个人中心</div>
<svg class="abs" style="left:19.2px;top:583.9px" width="19.4" height="14.8" viewBox="0 0 19.4 14.8"><circle cx="7" cy="3.4" r="3.4" fill="#fff"/><path d="M0 13.6 V11 Q0 7.2 4 7.2 H9.6 Q13.4 7.2 13.4 10.4 V13.6 Q13.4 14.8 12.2 14.8 H1.2 Q0 14.8 0 13.6 Z" fill="#fff"/><path d="M12.9 4.6 H15.9 V8.1 H19.3 V11.1 H15.9 V14.6 H12.9 V11.1 H9.5 V8.1 H12.9 Z" fill="#fff" stroke="#3a3a3a" stroke-width="0.9"/></svg>
<div class="t" style="left:43px;top:581.4000000000001px;font-size:16px">团队中心</div>
<div class="t" style="left:122px;top:436.7px;">用户中心</div>
<div class="t" style="left:193px;top:436.7px;">绑定银行</div>
<div class="t" style="left:264px;top:436.7px;">密码设定</div>
<div class="t" style="left:122px;top:472.7px;">站内信息</div>
<div class="t" style="left:193px;top:472.7px;">投注记录</div>
<div class="t" style="left:264px;top:472.7px;">账变记录</div>
<div class="t" style="left:122px;top:508.7px;">盈亏报表</div>
<div class="t" style="left:193px;top:508.7px;">充值记录</div>
<div class="t" style="left:264px;top:508.7px;">提现记录</div>
<div class="t" style="left:122px;top:580.7px;">代理中心</div>
<div class="t" style="left:193px;top:580.7px;">团队记录</div>
<div class="t" style="left:264px;top:580.7px;">团队报表</div>
<div class="t" style="left:122px;top:616.7px;">历史账变</div>
<div class="t" style="left:193px;top:616.7px;">出款记录</div>
<div class="t" style="left:264px;top:616.7px;">下级管理</div>
<div class="t" style="left:122px;top:652.7px;">开户设置</div>
<div class="t" style="left:193px;top:652.7px;">注册设置</div>
<div class="t" style="left:264px;top:652.7px;">链接管理</div>
</div>
</body>
</html>
